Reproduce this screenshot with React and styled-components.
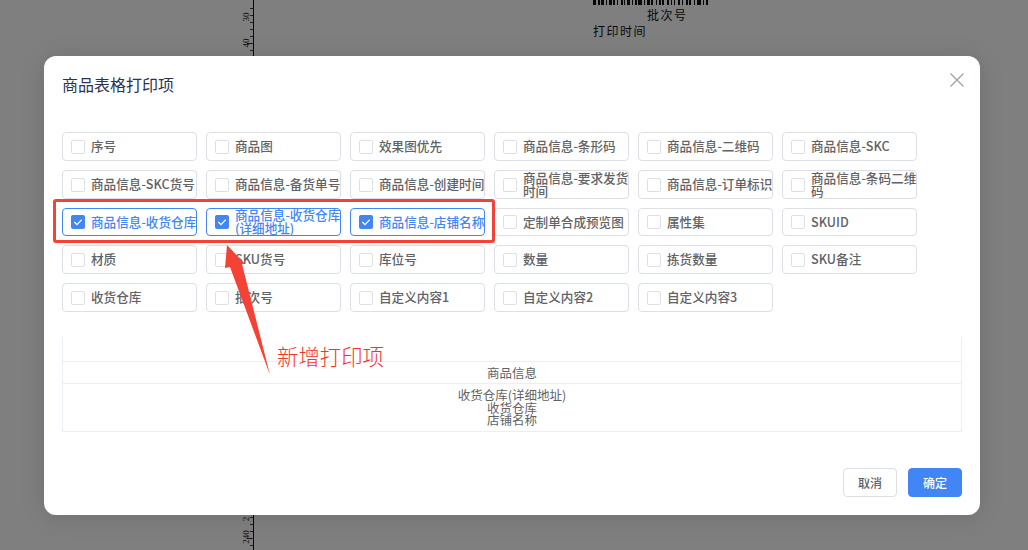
import React from 'react';
import styled, { createGlobalStyle } from 'styled-components';

const FONT = '"Noto Sans CJK SC", "Noto Sans", sans-serif';

const GlobalStyle = createGlobalStyle`
  html, body {
    margin: 0;
    padding: 0;
    height: 100%;
    overflow: hidden;
    background: #fff;
    font-family: ${FONT};
  }
`;

const Canvas = styled.div`
  position: relative;
  display: flex;
  align-items: flex-start;
  width: 1028px;
  height: 550px;
  padding-left: 236px;
  box-sizing: border-box;
  overflow: hidden;
  background: #fff;
`;

const LabelPreview = styled.div`
  width: 150px;
  margin-left: 337px;
  color: #111;
  font-size: 12px;
  line-height: 16px;
  letter-spacing: 1.5px;
`;

const BatchText = styled.div`
  margin: 2px 0 0 54px;
`;

const Scrim = styled.div`
  position: absolute;
  inset: 0;
  background: rgba(0, 0, 0, 0.5);
  padding: 56px 0 0 44px;
`;

const Modal = styled.div`
  position: relative;
  width: 936px;
  height: 459px;
  box-sizing: border-box;
  padding: 0 18px;
  background: #fff;
  border-radius: 12px;
  box-shadow: 0 2px 24px rgba(0, 0, 0, 0.12);
`;

const Header = styled.div`
  display: flex;
  justify-content: space-between;
  align-items: flex-start;
  height: 76px;
`;

const Title = styled.div`
  margin-top: 16px;
  font-size: 16px;
  line-height: 24px;
  color: #2c3350;
`;

const CloseButton = styled.div`
  width: 16px;
  height: 16px;
  margin: 13px -3px 0 0;
  color: #9a9ea8;
`;

const OptionGrid = styled.div`
  display: grid;
  grid-template-columns: repeat(6, 135px);
  grid-template-rows: 29px 29px 28px 29px 29px;
  gap: 9px;
`;

const Option = styled.div`
  display: flex;
  align-items: center;
  box-sizing: border-box;
  padding-left: 8px;
  border: 1px solid ${(p) => (p.$checked ? '#4285f4' : '#dcdfe6')};
  border-radius: 4px;
  background: #fff;
  color: ${(p) => (p.$checked ? '#4285f4' : '#606266')};
`;

const Box = styled.span`
  flex: none;
  display: flex;
  align-items: center;
  justify-content: center;
  box-sizing: border-box;
  width: 14px;
  height: 14px;
  border: ${(p) => (p.$checked ? '0' : '1px solid #dcdfe6')};
  border-radius: 2px;
  background: ${(p) => (p.$checked ? '#4285f4' : '#fff')};
`;

const OptionText = styled.span`
  flex: none;
  width: 106px;
  margin-left: 6px;
  font-size: 12.6px;
  font-weight: 500;
  line-height: 12.7px;
  word-break: break-all;
`;

const PreviewTable = styled.div`
  margin-top: 25px;
  width: 900px;
  box-sizing: border-box;
  border-left: 1px solid #ebeef5;
  border-right: 1px solid #ebeef5;
  border-bottom: 1px solid #ebeef5;
  color: #606266;
  font-size: 12.5px;
  text-align: center;
`;

const BlankRow = styled.div`
  height: 24px;
  border-bottom: 1px solid #ebeef5;
`;

const HeadRow = styled.div`
  height: 21px;
  line-height: 21px;
  border-bottom: 1px solid #ebeef5;
`;

const BodyRow = styled.div`
  box-sizing: border-box;
  height: 47px;
  padding-top: 5px;
  line-height: 12.7px;
`;

const Footer = styled.div`
  display: flex;
  justify-content: flex-end;
  gap: 11px;
  margin-top: 36px;
`;

const Button = styled.div`
  display: flex;
  align-items: center;
  justify-content: center;
  box-sizing: border-box;
  width: 54px;
  height: 29px;
  border-radius: 4px;
  font-size: 12px;
  border: 1px solid ${(p) => (p.$primary ? '#4285f4' : '#dcdfe6')};
  background: ${(p) => (p.$primary ? '#4285f4' : '#fff')};
  color: ${(p) => (p.$primary ? '#fff' : '#606266')};
  font-weight: 500;
`;

const Highlight = styled.div`
  position: absolute;
  left: 9px;
  top: 143px;
  width: 442px;
  height: 44px;
  box-sizing: border-box;
  border: 3px solid #f44336;
  border-radius: 3px;
`;

const ArrowSvg = styled.svg`
  position: absolute;
  left: 0;
  top: 0;
  pointer-events: none;
`;

const Note = styled.div`
  position: absolute;
  left: 233px;
  top: 285px;
  font-size: 21.4px;
  font-weight: 300;
  line-height: 30px;
  color: #f5352a;
`;

const options = [
  ['序号'], ['商品图'], ['效果图优先'], ['商品信息-条形码'], ['商品信息-二维码'], ['商品信息-SKC'],
  ['商品信息-SKC货号'], ['商品信息-备货单号'], ['商品信息-创建时间'], ['商品信息-要求发货时间'], ['商品信息-订单标识'], ['商品信息-条码二维码'],
  ['商品信息-收货仓库', true], ['商品信息-收货仓库(详细地址)', true], ['商品信息-店铺名称', true], ['定制单合成预览图'], ['属性集'], ['SKUID'],
  ['材质'], ['SKU货号'], ['库位号'], ['数量'], ['拣货数量'], ['SKU备注'],
  ['收货仓库'], ['批次号'], ['自定义内容1'], ['自定义内容2'], ['自定义内容3'],
];

const barWidths = [3, 2, 2, 1, 3, 2, 1, 2, 3, 1, 2, 2, 1, 3, 2, 1, 1, 2, 3, 2, 1, 2, 2, 1, 4, 2, 1, 2, 3, 1, 2, 3, 1, 2, 2, 1, 2, 3, 2, 2, 1, 2, 1, 3, 2, 2, 1, 3, 2, 1, 2, 3, 1, 2, 4, 2, 1, 2, 2, 3];

const rulerLabels = [
  ['30', 17],
  ['40', 43],
  ['2', 519],
  ['240', 537],
];

const minorTicks = [8, 15, 22, 29, 36, 50, 517, 524, 531, 545];

function Ruler() {
  return (
    <svg width="20" height="550" style={{ display: 'block', flex: 'none' }}>
      <rect x="17" y="0" width="1" height="550" fill="#111" />
      {minorTicks.map((y) => (
        <rect key={y} x="14" y={y} width="3" height="1" fill="#444" />
      ))}
      <rect x="11" y="43" width="6" height="1" fill="#333" />
      <rect x="11" y="538" width="6" height="1" fill="#333" />
      {rulerLabels.map(([text, y]) => (
        <text
          key={text}
          x="10"
          y={y}
          fontSize="9"
          fontFamily="Liberation Serif, serif"
          fill="#222"
          textAnchor="middle"
          transform={`rotate(-90 10 ${y})`}
          dominantBaseline="central"
        >
          {text}
        </text>
      ))}
    </svg>
  );
}

function Barcode() {
  let x = 0;
  const bars = barWidths.map((w, i) => {
    const rect = i % 2 === 0 ? <rect key={i} x={x} y="0" width={w} height="5" fill="#111" /> : null;
    x += w;
    return rect;
  });
  return (
    <svg width="146" height="5" style={{ display: 'block' }}>
      {bars}
    </svg>
  );
}

export default function App() {
  return (
    <Canvas>
      <GlobalStyle />
      <Ruler />
      <LabelPreview>
        <Barcode />
        <BatchText>批次号</BatchText>
        <div>打印时间</div>
      </LabelPreview>
      <Scrim>
        <Modal>
          <Header>
            <Title>商品表格打印项</Title>
            <CloseButton>
              <svg width="16" height="16" viewBox="0 0 16 16">
                <path d="M1.5 1.5 L14.5 14.5 M14.5 1.5 L1.5 14.5" stroke="currentColor" strokeWidth="1.2" fill="none" />
              </svg>
            </CloseButton>
          </Header>
          <OptionGrid>
            {options.map(([label, checked]) => (
              <Option key={label} $checked={checked}>
                <Box $checked={checked}>
                  {checked && (
                    <svg width="14" height="14" viewBox="0 0 14 14">
                      <path d="M3.2 7 L6 9.6 L10.8 4.6" stroke="#fff" strokeWidth="1.3" fill="none" />
                    </svg>
                  )}
                </Box>
                <OptionText>{label}</OptionText>
              </Option>
            ))}
          </OptionGrid>
          <PreviewTable>
            <BlankRow />
            <HeadRow>商品信息</HeadRow>
            <BodyRow>
              <div>收货仓库(详细地址)</div>
              <div>收货仓库</div>
              <div>店铺名称</div>
            </BodyRow>
          </PreviewTable>
          <Footer>
            <Button>取消</Button>
            <Button $primary>确定</Button>
          </Footer>
          <Highlight />
          <ArrowSvg width="936" height="459">
            <polygon points="183,189 201,208 198,208 226,319 186,211 181,212" fill="#f44336" />
          </ArrowSvg>
          <Note>新增打印项</Note>
        </Modal>
      </Scrim>
    </Canvas>
  );
}
